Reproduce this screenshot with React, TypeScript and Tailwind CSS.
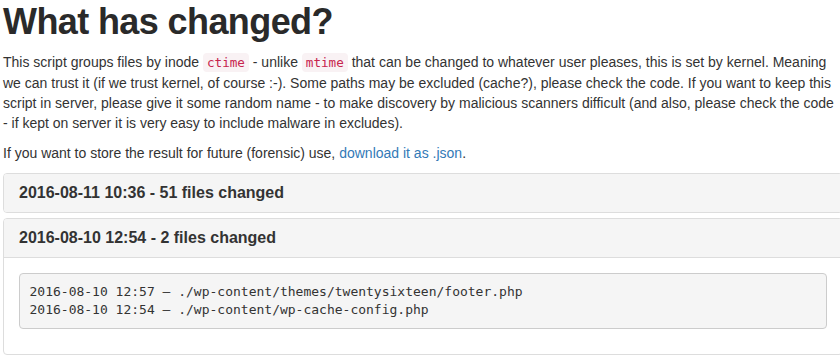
import React from "react";

const mono = "font-['DejaVu_Sans_Mono',Menlo,monospace]";

function Code({ children }: { children: React.ReactNode }) {
  return (
    <code className={`${mono} text-[12.6px] px-[4px] py-[2px] rounded-[4px] bg-[#f9f2f4] text-[#c7254e]`}>
      {children}
    </code>
  );
}

export default function App() {
  return (
    <div className="w-[840px] h-[359px] overflow-hidden bg-white">
      <div className="w-[840px] ml-[3px] text-[#333] text-[14px] leading-[20px] font-['Liberation_Sans',Arial,sans-serif]">
        <h1 className="mt-[2px] mb-[10px] text-[36px] leading-[39.6px] font-bold tracking-[-0.6px] text-[#2a2a2a]">
          What has changed?
        </h1>
        <p className="mb-[10px] whitespace-nowrap">
          This script groups files by inode <Code>ctime</Code> - unlike <Code>mtime</Code> that can be changed to
          whatever user pleases, this is set by kernel. Meaning
          <br />
          we can trust it (if we trust kernel, of course :-). Some paths may be excluded (cache?), please check the
          code. If you want to keep this
          <br />
          script in server, please give it some random name - to make discovery by malicious scanners difficult (and
          also, please check the code
          <br />- if kept on server it is very easy to include malware in excludes).
        </p>
        <p className="mb-[10px]">
          If you want to store the result for future (forensic) use,{" "}
          <a className="text-[#337ab7]" href="#">
            download it as .json
          </a>
          .
        </p>
        <div className="flex flex-col gap-[5px] mt-[1px]">
          <div className="border border-[#ddd] rounded-[4px] overflow-hidden">
            <div className="bg-[#f5f5f5] px-[15px] py-[10px]">
              <h4 className="text-[16px] leading-[18px] font-bold text-[#333]">
                2016-08-11 10:36 - 51 files changed
              </h4>
            </div>
          </div>
          <div className="border border-[#ddd] rounded-[4px] overflow-hidden">
            <div className="bg-[#f5f5f5] px-[15px] py-[10px] border-b border-[#ddd]">
              <h4 className="text-[16px] leading-[18px] font-bold text-[#333]">
                2016-08-10 12:54 - 2 files changed
              </h4>
            </div>
            <div className="p-[15px]">
              <pre
                className={`${mono} text-[13px] leading-[17.5px] text-[#333] bg-[#f5f5f5] border border-[#ccc] rounded-[4px] p-[9.5px] mb-[10px]`}
              >
                {"2016-08-10 12:57 – ./wp-content/themes/twentysixteen/footer.php\n2016-08-10 12:54 – ./wp-content/wp-cache-config.php"}
              </pre>
            </div>
          </div>
        </div>
      </div>
    </div>
  );
}
